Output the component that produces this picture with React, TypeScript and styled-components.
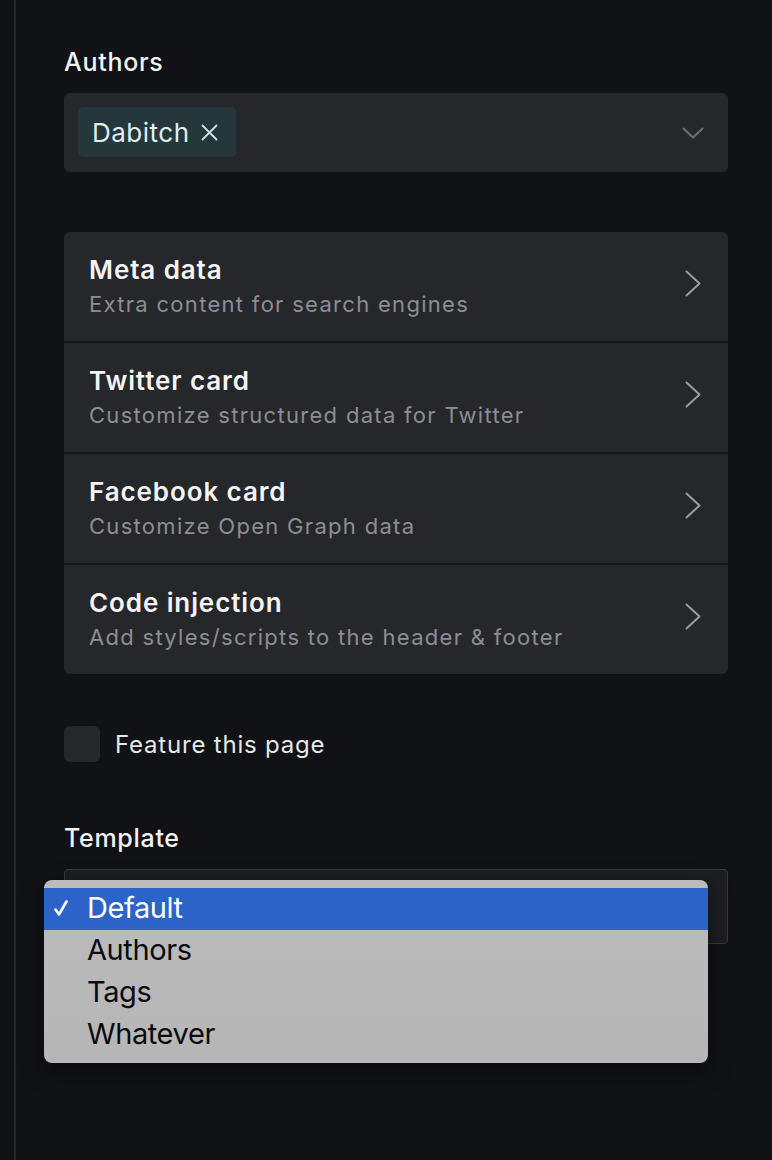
import React from "react";
import styled, { createGlobalStyle } from "styled-components";

const GlobalStyle = createGlobalStyle`
  html, body {
    margin: 0;
    padding: 0;
    background: #111216;
  }
  body {
    font-family: Inter, "Noto Sans", sans-serif;
    -webkit-font-smoothing: antialiased;
  }
`;

const Page = styled.div`
  min-height: 1160px;
  background: #111216;
  padding-left: 14px;
  box-sizing: border-box;
`;

const Panel = styled.div`
  border-left: 2px solid #25272b;
  min-height: 1160px;
  padding: 46px 44px 0 48px;
  box-sizing: border-box;
  display: flex;
  flex-direction: column;
`;

const Label = styled.div<{ $top?: number }>`
  color: #f2f3f4;
  font-size: 25px;
  font-weight: 500;
  letter-spacing: 0.7px;
  line-height: 32px;
  margin-top: ${(p) => p.$top ?? 0}px;
  margin-bottom: 15px;
`;

const MultiSelect = styled.div`
  height: 79px;
  background: #26272b;
  border-radius: 6px;
  box-sizing: border-box;
  padding: 14px 24px 14px 14px;
  display: flex;
  align-items: flex-start;
  justify-content: space-between;
`;

const Chip = styled.div`
  height: 50px;
  background: #25373b;
  border-radius: 5px;
  padding: 0 18px 0 14px;
  display: flex;
  align-items: center;
  gap: 11px;
  color: #dfeef0;
  font-size: 26px;
  letter-spacing: 0.5px;
  font-weight: 400;
`;

const ChevronBox = styled.div`
  align-self: center;
  display: flex;
`;

const CardGroup = styled.div`
  margin-top: 60px;
  display: flex;
  flex-direction: column;
  gap: 2px;
  background: #17181b;
  border-radius: 6px;
  overflow: hidden;
`;

const Row = styled.div`
  height: 109px;
  background: #26272b;
  display: flex;
  align-items: center;
  justify-content: space-between;
  padding: 0 27px 0 25px;
  box-sizing: border-box;
`;

const RowText = styled.div`
  display: flex;
  flex-direction: column;
  gap: 2px;
  margin-bottom: 1px;
`;

const RowTitle = styled.div`
  color: #f4f4f5;
  font-size: 26px;
  font-weight: 600;
  letter-spacing: 0.9px;
  line-height: 34px;
`;

const RowSub = styled.div`
  color: #8b8e93;
  font-size: 22px;
  font-weight: 400;
  line-height: 30px;
  letter-spacing: 1.3px;
`;

const ArrowBox = styled.div`
  display: flex;
  margin-bottom: 6px;
`;

const CheckRow = styled.label`
  margin-top: 52px;
  display: flex;
  align-items: center;
  gap: 15px;
  color: #e6e7e8;
  font-size: 24px;
  letter-spacing: 0.8px;
`;

const Checkbox = styled.span`
  width: 36px;
  height: 36px;
  border-radius: 6px;
  background: #26272b;
  display: inline-block;
`;

const SelectWrap = styled.div`
  position: relative;
`;

const NativeSelect = styled.div`
  height: 75px;
  border: 1px solid #393a3e;
  background: #1d1e22;
  border-radius: 4px;
  box-sizing: border-box;
`;

const Menu = styled.div`
  position: absolute;
  left: -20px;
  top: 11px;
  width: 664px;
  padding: 8px 0 7px;
  background: linear-gradient(180deg, #bcbcbd 0%, #b6b6b7 100%);
  border-radius: 8px;
  box-shadow: 0 8px 24px rgba(0, 0, 0, 0.45);
`;

const MenuItem = styled.div<{ $selected?: boolean }>`
  height: 42px;
  box-sizing: border-box;
  padding: 0 0 3px 43px;
  display: flex;
  align-items: center;
  position: relative;
  font-family: Inter, "Liberation Sans", sans-serif;
  font-size: 29px;
  letter-spacing: -0.4px;
  color: ${(p) => (p.$selected ? "#ffffff" : "#0b0b0b")};
  background: ${(p) => (p.$selected ? "#2c63c9" : "transparent")};
`;

const CheckMark = styled.svg`
  position: absolute;
  left: 10px;
  top: 12px;
`;

const XIcon = () => (
  <svg width="17" height="17" viewBox="0 0 17 17" fill="none">
    <path d="M1.5 1.5L15.5 15.5M15.5 1.5L1.5 15.5" stroke="#cfdfe1" strokeWidth="1.8" strokeLinecap="round" />
  </svg>
);

const ChevronDown = () => (
  <svg width="22" height="12" viewBox="0 0 22 12" fill="none">
    <path d="M1.5 1.5L11 10.5L20.5 1.5" stroke="#6e7074" strokeWidth="2" strokeLinecap="round" strokeLinejoin="round" />
  </svg>
);

const ChevronRight = () => (
  <svg width="16" height="27" viewBox="0 0 16 27" fill="none">
    <path d="M1.5 1.5L14.5 13.5L1.5 25.5" stroke="#9b9ca0" strokeWidth="2" strokeLinecap="round" strokeLinejoin="round" />
  </svg>
);

const Tick = () => (
  <CheckMark width="14" height="16" viewBox="0 0 14 16" fill="none">
    <path d="M1.5 9.5L5 14.5L12.5 1.5" stroke="#ffffff" strokeWidth="2.6" strokeLinecap="round" strokeLinejoin="round" />
  </CheckMark>
);

const rows = [
  { title: "Meta data", sub: "Extra content for search engines" },
  { title: "Twitter card", sub: "Customize structured data for Twitter" },
  { title: "Facebook card", sub: "Customize Open Graph data" },
  { title: "Code injection", sub: "Add styles/scripts to the header & footer" },
];

const options = ["Default", "Authors", "Tags", "Whatever"];

export default function App() {
  return (
    <>
      <GlobalStyle />
      <Page>
        <Panel>
          <Label>Authors</Label>
          <MultiSelect>
            <Chip>
              Dabitch
              <XIcon />
            </Chip>
            <ChevronBox>
              <ChevronDown />
            </ChevronBox>
          </MultiSelect>

          <CardGroup>
            {rows.map((r) => (
              <Row key={r.title}>
                <RowText>
                  <RowTitle>{r.title}</RowTitle>
                  <RowSub>{r.sub}</RowSub>
                </RowText>
                <ArrowBox>
                  <ChevronRight />
                </ArrowBox>
              </Row>
            ))}
          </CardGroup>

          <CheckRow>
            <Checkbox />
            Feature this page
          </CheckRow>

          <Label $top={60}>Template</Label>
          <SelectWrap>
            <NativeSelect />
            <Menu>
              {options.map((o, i) => (
                <MenuItem key={o} $selected={i === 0}>
                  {i === 0 && <Tick />}
                  {o}
                </MenuItem>
              ))}
            </Menu>
          </SelectWrap>
        </Panel>
      </Page>
    </>
  );
}
